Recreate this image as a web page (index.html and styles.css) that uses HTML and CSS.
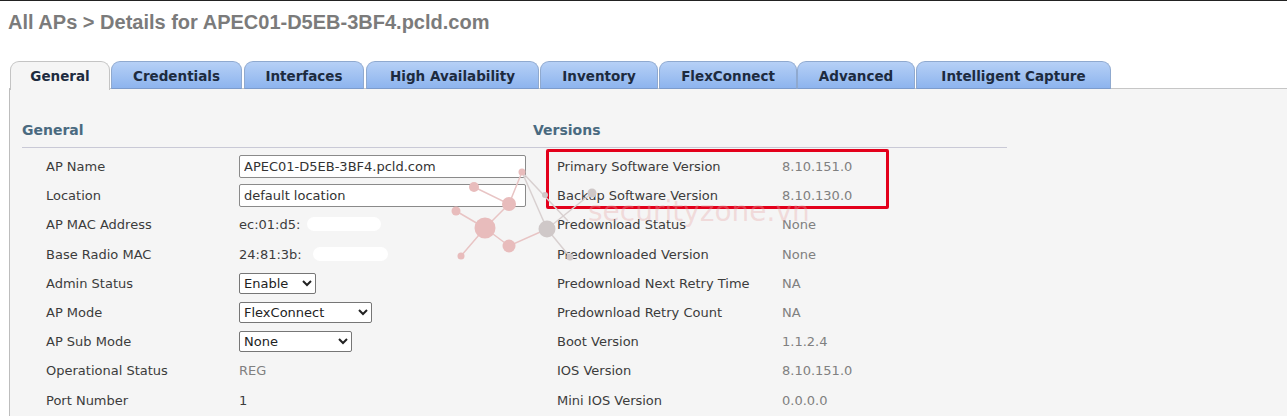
FILE: index.html
```html
<!DOCTYPE html>
<html lang="en">
<head>
<meta charset="utf-8">
<title>AP Details</title>
<link rel="stylesheet" href="styles.css">
</head>
<body>
<h1 class="title">All APs &gt; Details for APEC01-D5EB-3BF4.pcld.com</h1>
<nav class="tabs">
  <span class="tab active tab-general">General</span>
  <span class="tab tab-cred">Credentials</span>
  <span class="tab tab-int">Interfaces</span>
  <span class="tab tab-ha">High Availability</span>
  <span class="tab tab-inv">Inventory</span>
  <span class="tab tab-flex">FlexConnect</span>
  <span class="tab tab-adv">Advanced</span>
  <span class="tab tab-cap">Intelligent Capture</span>
</nav>
<main class="panel">
  <section class="col col-general">
    <h2 class="heading">General</h2>
    <div class="rows rows-general">
      <span class="lbl">AP Name</span><span class="val"><input class="field" value="APEC01-D5EB-3BF4.pcld.com"></span>
      <span class="lbl">Location</span><span class="val"><input class="field" value="default location"></span>
      <span class="lbl">AP MAC Address</span><span class="val">ec:01:d5:</span>
      <span class="lbl">Base Radio MAC</span><span class="val">24:81:3b:</span>
      <span class="lbl">Admin Status</span><span class="val"><select class="sel sel-status"><option>Enable</option></select></span>
      <span class="lbl">AP Mode</span><span class="val"><select class="sel sel-mode"><option>FlexConnect</option></select></span>
      <span class="lbl">AP Sub Mode</span><span class="val"><select class="sel sel-sub"><option>None</option></select></span>
      <span class="lbl">Operational Status</span><span class="val muted">REG</span>
      <span class="lbl">Port Number</span><span class="val">1</span>
    </div>
  </section>
  <section class="col col-versions">
    <h2 class="heading">Versions</h2>
    <div class="rows rows-versions">
      <span class="lbl">Primary Software Version</span><span class="val muted">8.10.151.0</span>
      <span class="lbl">Backup Software Version</span><span class="val muted">8.10.130.0</span>
      <span class="lbl">Predownload Status</span><span class="val muted">None</span>
      <span class="lbl">Predownloaded Version</span><span class="val muted">None</span>
      <span class="lbl">Predownload Next Retry Time</span><span class="val muted">NA</span>
      <span class="lbl">Predownload Retry Count</span><span class="val muted">NA</span>
      <span class="lbl">Boot Version</span><span class="val muted">1.1.2.4</span>
      <span class="lbl">IOS Version</span><span class="val muted">8.10.151.0</span>
      <span class="lbl">Mini IOS Version</span><span class="val muted">0.0.0.0</span>
    </div>
  </section>
</main>
<div class="smudge smudge-a"></div>
<div class="smudge smudge-b"></div>
<div class="highlight"></div>
<svg class="mark" width="330" height="110" viewBox="0 0 330 110" aria-hidden="true">
  <g stroke="#e8c4c4" stroke-width="1.5" fill="none">
    <path d="M26 16 L61 33 L37 57 L8 40 M61 33 L74 1 M37 57 L13 85 M37 57 L61 75 L99 58"/>
    <path d="M74 1 L99 58" stroke="#d8d0d0"/>
    <path d="M99 58 L122 86 M99 58 L144 22 M74 1 L120 50" stroke="#d8d0d0"/>
  </g>
  <g fill="#e8bcbc">
    <circle cx="26" cy="16" r="5"/><circle cx="61" cy="33" r="7"/><circle cx="37" cy="57" r="10.5"/>
    <circle cx="8" cy="40" r="4.5"/><circle cx="74" cy="1" r="3.5"/><circle cx="61" cy="75" r="6.5"/><circle cx="13" cy="85" r="3.5"/>
  </g>
  <g fill="#cfc8c8">
    <circle cx="99" cy="58" r="8.5"/><circle cx="122" cy="86" r="3.5"/><circle cx="144" cy="22" r="4.5"/>
    <circle cx="97" cy="24" r="3"/>
  </g>
  <text x="140" y="50" class="mark-text">securityzone.vn</text>
</svg>
</body>
</html>
```
FILE: styles.css
```css
* { box-sizing: border-box; }
html, body { margin: 0; padding: 0; }
body {
  width: 1287px;
  height: 416px;
  overflow: hidden;
  position: relative;
  background: #fff;
  border-top: 1px solid #222;
  font-family: "DejaVu Sans", Verdana, sans-serif;
  font-size: 13px;
  color: #333;
}
.title {
  margin: 0;
  padding: 10px 0 0 8px;
  height: 60px;
  font: bold 20px/22px "Liberation Sans", Arial, sans-serif;
  color: #7b7b7b;
}
.tabs {
  display: flex;
  padding-left: 10px;
  height: 28px;
  align-items: flex-end;
  position: relative;
  z-index: 1;
}
.tab {
  height: 28px;
  padding-top: 6px;
  text-align: center;
  font-weight: bold;
  font-size: 13.5px;
  line-height: 17px;
  color: #1d2b3f;
  background: linear-gradient(#b6d0f6, #8db4ee);
  border: 1px solid #8fa9cf;
  border-bottom: 1px solid #7d9ccc;
  border-radius: 9px 9px 0 0;
}
.tab.active {
  background: #f5f5f5;
  border-color: #c4c4c4;
  border-bottom: none;
  height: 29px;
  margin-bottom: -1px;
}
.tab-general { width: 100px; margin-right: 1px; }
.tab-cred { width: 131px; margin-right: 2px; }
.tab-int { width: 120px; margin-right: 2px; }
.tab-ha { width: 173px; margin-right: 1px; }
.tab-inv { width: 118px; margin-right: 1px; }
.tab-flex { width: 138px; }
.tab-adv { width: 118px; margin-right: 1px; }
.tab-cap { width: 195px; }
.panel {
  display: flex;
  margin-left: 9px;
  height: 328px;
  background: #f5f5f5;
  border-left: 1px solid #bdbdbd;
  border-top: 1px solid #c6c6c6;
  margin-top: -1px;
}
.col { padding-top: 32px; }
.col-general { width: 511px; margin-left: 12px; }
.col-versions { width: 474px; }
.heading {
  margin: 0;
  height: 27px;
  padding-bottom: 8px;
  font-size: 14px;
  line-height: 18px;
  font-weight: bold;
  color: #4a6a80;
  border-bottom: 1px solid #c9c9d6;
}
.rows {
  display: grid;
  grid-auto-rows: 29.2px;
  align-items: center;
  padding-left: 24px;
  padding-top: 4px;
}
.rows-general { grid-template-columns: 193px 1fr; }
.rows-versions { grid-template-columns: 225px 1fr; }
.lbl { color: #3c3c3c; white-space: nowrap; }
.val { color: #3c3c3c; white-space: nowrap; }
.muted { color: #808080; }
.field {
  display: block;
  width: 287px;
  height: 23px;
  padding: 0 4px;
  border: 1px solid #8a8a8a;
  border-radius: 2px;
  background: #fff;
  font: 13px "DejaVu Sans", Verdana, sans-serif;
  color: #333;
}
.sel {
  display: block;
  height: 21px;
  padding: 0;
  border: 1px solid #767676;
  border-radius: 2px;
  background-color: #fff;
  font: 13px "DejaVu Sans", Verdana, sans-serif;
  color: #222;
}
.sel-status { width: 77px; }
.sel-mode { width: 133px; }
.sel-sub { width: 113px; }
.smudge {
  position: absolute;
  background: #fff;
  border-radius: 7px;
  height: 14px;
}
.smudge-a { left: 307px; top: 216px; width: 74px; }
.smudge-b { left: 313px; top: 246px; width: 75px; }
.highlight {
  position: absolute;
  left: 546px;
  top: 148px;
  width: 343px;
  height: 60px;
  border: 3px solid #e3001b;
  border-radius: 2px;
}
.mark {
  position: absolute;
  left: 448px;
  top: 170px;
  overflow: visible;
  pointer-events: none;
}
.mark-text {
  font: 28px "DejaVu Sans", sans-serif;
  fill: #e8a8a8;
  fill-opacity: .35;
}
```
